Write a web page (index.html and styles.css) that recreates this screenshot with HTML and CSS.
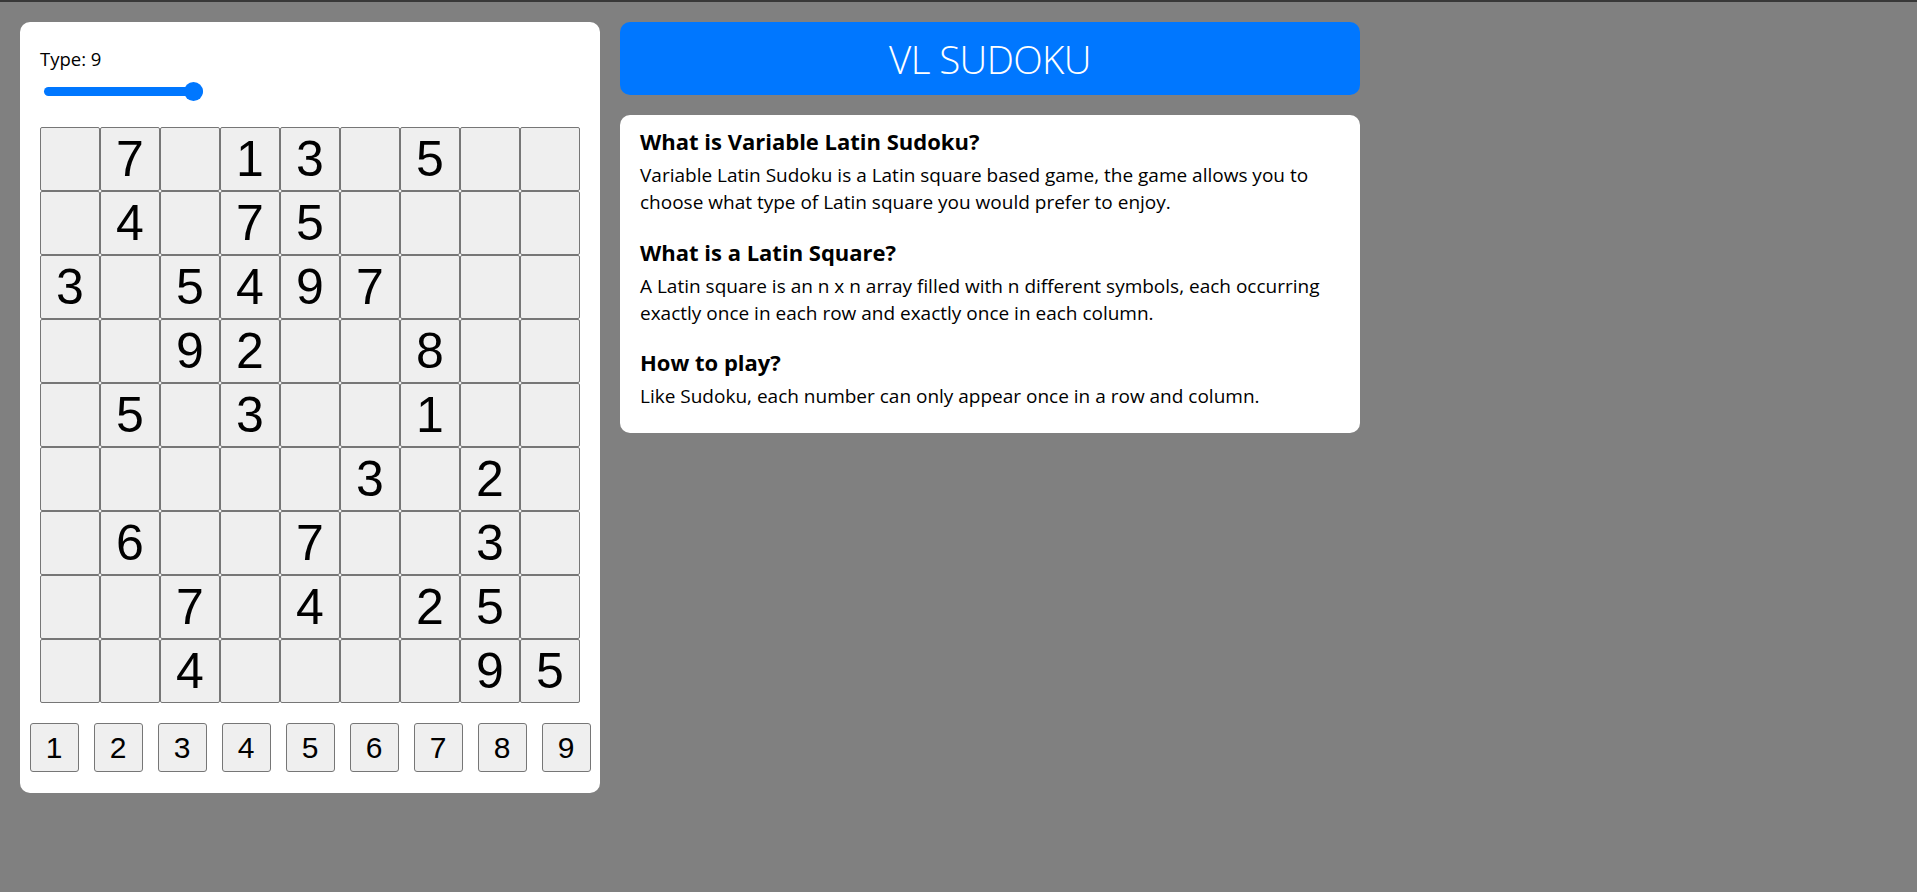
FILE: index.html
```html
<!DOCTYPE html>
<html lang="en">
<head>
<meta charset="utf-8">
<title>VL Sudoku</title>
<link rel="stylesheet" href="styles.css">
</head>
<body>
<div class="topline"></div>
<div class="page">
  <section class="board-card">
    <label class="type-label" for="type">Type: 9</label>
    <div class="slider-row">
      <input class="slider" id="type" type="range" min="2" max="9" value="9">
    </div>
    <div class="grid">
      <div class="cell"></div><div class="cell">7</div><div class="cell"></div><div class="cell">1</div><div class="cell">3</div><div class="cell"></div><div class="cell">5</div><div class="cell"></div><div class="cell"></div>
      <div class="cell"></div><div class="cell">4</div><div class="cell"></div><div class="cell">7</div><div class="cell">5</div><div class="cell"></div><div class="cell"></div><div class="cell"></div><div class="cell"></div>
      <div class="cell">3</div><div class="cell"></div><div class="cell">5</div><div class="cell">4</div><div class="cell">9</div><div class="cell">7</div><div class="cell"></div><div class="cell"></div><div class="cell"></div>
      <div class="cell"></div><div class="cell"></div><div class="cell">9</div><div class="cell">2</div><div class="cell"></div><div class="cell"></div><div class="cell">8</div><div class="cell"></div><div class="cell"></div>
      <div class="cell"></div><div class="cell">5</div><div class="cell"></div><div class="cell">3</div><div class="cell"></div><div class="cell"></div><div class="cell">1</div><div class="cell"></div><div class="cell"></div>
      <div class="cell"></div><div class="cell"></div><div class="cell"></div><div class="cell"></div><div class="cell"></div><div class="cell">3</div><div class="cell"></div><div class="cell">2</div><div class="cell"></div>
      <div class="cell"></div><div class="cell">6</div><div class="cell"></div><div class="cell"></div><div class="cell">7</div><div class="cell"></div><div class="cell"></div><div class="cell">3</div><div class="cell"></div>
      <div class="cell"></div><div class="cell"></div><div class="cell">7</div><div class="cell"></div><div class="cell">4</div><div class="cell"></div><div class="cell">2</div><div class="cell">5</div><div class="cell"></div>
      <div class="cell"></div><div class="cell"></div><div class="cell">4</div><div class="cell"></div><div class="cell"></div><div class="cell"></div><div class="cell"></div><div class="cell">9</div><div class="cell">5</div>
    </div>
    <div class="numpad">
      <button class="num">1</button><button class="num">2</button><button class="num">3</button><button class="num">4</button><button class="num">5</button><button class="num">6</button><button class="num">7</button><button class="num">8</button><button class="num">9</button>
    </div>
  </section>
  <div class="side">
    <header class="title-bar"><h1 class="title">VL SUDOKU</h1></header>
    <section class="info-card">
      <h3 class="info-heading">What is Variable Latin Sudoku?</h3>
      <p class="info-text">Variable Latin Sudoku is a Latin square based game, the game allows you to choose what type of Latin square you would prefer to enjoy.</p>
      <h3 class="info-heading">What is a Latin Square?</h3>
      <p class="info-text">A Latin square is an n x n array filled with n different symbols, each occurring exactly once in each row and exactly once in each column.</p>
      <h3 class="info-heading">How to play?</h3>
      <p class="info-text last">Like Sudoku, each number can only appear once in a row and column.</p>
    </section>
  </div>
</div>
</body>
</html>
```
FILE: styles.css
```css
* { box-sizing: border-box; }
html, body { margin: 0; padding: 0; }
body {
  background: #808080;
  font-family: "Open Sans", "Noto Sans", sans-serif;
  color: #000;
  min-height: 892px;
}
.topline { height: 2px; background: #383838; }
.page {
  display: flex;
  align-items: flex-start;
  gap: 20px;
  padding: 20px 0 0 20px;
}
.board-card {
  width: 580px;
  background: #fff;
  border-radius: 10px;
  padding: 20px 20px 21px 20px;
}
.type-label {
  display: block;
  margin-top: 4px;
  font-size: 18.5px;
  line-height: 25px;
  height: 25px;
}
.slider-row {
  height: 19px;
  margin-top: 11px;
  display: flex;
  align-items: center;
}
.slider {
  -webkit-appearance: none;
  appearance: none;
  width: 159px;
  height: 9px;
  margin: 0 0 0 4px;
  border-radius: 5px;
  background: #0077ff;
  outline: none;
}
.slider::-webkit-slider-thumb {
  -webkit-appearance: none;
  appearance: none;
  width: 19px;
  height: 19px;
  border-radius: 50%;
  background: #0077ff;
  border: none;
}
.grid {
  margin-top: 26px;
  display: grid;
  grid-template-columns: repeat(9, 60px);
  grid-template-rows: repeat(9, 64px);
}
.cell {
  background: #efefef;
  border: 1px solid #767676;
  border-radius: 2px;
  font-family: "Liberation Sans", Arial, sans-serif;
  font-size: 50px;
  display: flex;
  align-items: center;
  justify-content: center;
  color: #000;
}
.numpad {
  margin-top: 20px;
  display: flex;
  justify-content: center;
  gap: 15px;
}
.num {
  flex: 0 0 49px;
  width: 49px;
  height: 49px;
  padding: 0;
  margin: 0;
  background: #efefef;
  border: 1px solid #767676;
  border-radius: 3px;
  font-family: "Liberation Sans", Arial, sans-serif;
  font-size: 30px;
  color: #000;
  display: flex;
  align-items: center;
  justify-content: center;
}
.side {
  width: 740px;
  display: flex;
  flex-direction: column;
  gap: 20px;
}
.title-bar {
  height: 73px;
  background: #0077ff;
  border-radius: 10px;
  display: flex;
  align-items: center;
  justify-content: center;
}
.title {
  margin: 0;
  font-size: 38.5px;
  letter-spacing: -0.6px;
  font-weight: 300;
  color: #fff;
  line-height: 54px;
}
.info-card {
  background: #fff;
  border-radius: 10px;
  padding: 12px 20px 23px 20px;
}
.info-heading {
  margin: 0 0 6px 0;
  font-size: 22px;
  font-weight: 700;
  line-height: 29px;
}
.info-text {
  margin: 0 0 21px 0;
  font-size: 19px;
  line-height: 27.3px;
}
.info-text.last { margin-bottom: 0; }
```
